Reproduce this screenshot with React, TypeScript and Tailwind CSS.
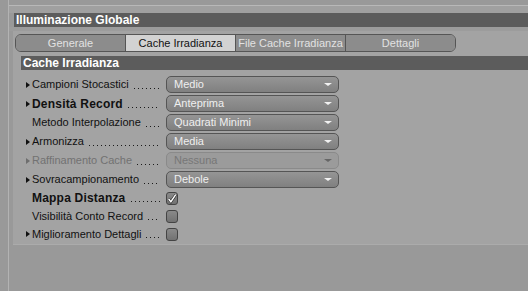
import React from "react";

type Row =
  | { kind: "select"; label: string; value: string; arrow?: boolean; bold?: boolean; disabled?: boolean }
  | { kind: "check"; label: string; checked?: boolean; arrow?: boolean; bold?: boolean };

const rows: Row[] = [
  { kind: "select", label: "Campioni Stocastici", value: "Medio", arrow: true },
  { kind: "select", label: "Densità Record", value: "Anteprima", arrow: true, bold: true },
  { kind: "select", label: "Metodo Interpolazione", value: "Quadrati Minimi" },
  { kind: "select", label: "Armonizza", value: "Media", arrow: true },
  { kind: "select", label: "Raffinamento Cache", value: "Nessuna", arrow: true, disabled: true },
  { kind: "select", label: "Sovracampionamento", value: "Debole", arrow: true },
  { kind: "check", label: "Mappa Distanza", checked: true, bold: true },
  { kind: "check", label: "Visibilità Conto Record" },
  { kind: "check", label: "Miglioramento Dettagli", arrow: true },
];

const tabs = ["Generale", "Cache Irradianza", "File Cache Irradianza", "Dettagli"];

const Arrow = ({ gray }: { gray?: boolean }) => (
  <span
    className={
      "inline-block w-0 h-0 border-y-[3px] border-y-transparent border-l-[4px] " +
      (gray ? "border-l-[#6e6e6e]" : "border-l-[#111]")
    }
  />
);

const Leader = ({ label, bold, disabled }: { label: string; bold?: boolean; disabled?: boolean }) => (
  <div className="flex items-center w-[130px] whitespace-nowrap">
    <span
      className={
        "shrink-0 " +
        (bold ? "font-bold text-[12px] tracking-[0.2px] " : "") +
        (disabled ? "text-[#727272]" : "text-[#111]")
      }
    >
      {label}
    </span>
    {/* puntini */}
    <span className="ml-[5px] mr-[2px] mt-[7px] flex-1 min-w-0 h-[1px] bg-[linear-gradient(to_right,#1a1a1a_1px,transparent_1px)] bg-[length:4px_1px]" />
  </div>
);

const App: React.FC = () => {
  return (
    <div
      className="w-[528px] h-[291px] bg-[#999999] flex overflow-hidden text-[11px] leading-none"
      style={{ fontFamily: '"Liberation Sans", Arial, sans-serif' }}
    >
      {/* strip sinistra */}
      <div className="w-[9px] h-full border-r border-[#b3b3b3]" />

      <div className="flex-1 flex flex-col">
        {/* linea superiore */}
        <div className="h-[6px] border-b border-[#b8b8b8]" />
        <div className="h-[7px] bg-[#a0a0a0]" />

        {/* header */}
        <div className="ml-[5px] h-[14px] bg-[#5c5c5c] flex items-center pl-[2px]">
          <span className="text-white font-bold text-[12px]">Illuminazione Globale</span>
        </div>
        <div className="h-[4px] bg-[#9c9c9c]" />

        {/* pannello */}
        <div className="ml-[4px] bg-[#a3a3a3] h-[214px] border-b border-[#ababab] flex flex-col">
          {/* tabs */}
          <div className="mt-[3px] ml-[2px] w-[441px] h-[18px] flex rounded-[6px] border border-[#555] overflow-hidden">
            {tabs.map((t, i) => (
              <div
                key={t}
                className={
                  "flex-1 flex items-center justify-center whitespace-nowrap " +
                  (i > 0 ? "border-l border-[#555] " : "") +
                  (i === 1 ? "bg-[#d2d2d2] text-[#111]" : "bg-[#8c8c8c] text-[#e2e2e2]")
                }
              >
                {t}
              </div>
            ))}
          </div>

          {/* sezione */}
          <div className="mt-[4px] ml-[8px] h-[14px] bg-[#5c5c5c] flex items-center pl-[2px]">
            <span className="text-white font-bold text-[12px]">Cache Irradianza</span>
          </div>

          <div className="mt-[5px] flex flex-col">
            {rows.map((r) => (
              <div
                key={r.label}
                className={"flex items-center " + (r.kind === "select" ? "h-[19px]" : "h-[18px]")}
              >
                <div className="w-[19px] pl-[13px] flex items-center">
                  {r.arrow && <Arrow gray={r.kind === "select" && r.disabled} />}
                </div>
                <Leader
                  label={r.label}
                  bold={r.bold}
                  disabled={r.kind === "select" && r.disabled}
                />
                {r.kind === "select" ? (
                  <div
                    className={
                      "ml-[4px] w-[173px] h-[17px] rounded-[5px] border flex items-center justify-between pl-[7px] pr-[6px] " +
                      (r.disabled
                        ? "border-[#8a8a8a] bg-[#9b9b9b] text-[#777]"
                        : "border-[#555] bg-gradient-to-b from-[#959595] to-[#808080] text-[#efefef]")
                    }
                  >
                    <span>{r.value}</span>
                    <span
                      className={
                        "w-0 h-0 border-x-[4px] border-x-transparent border-t-[3px] " +
                        (r.disabled ? "border-t-[#666]" : "border-t-[#f2f2f2]")
                      }
                    />
                  </div>
                ) : (
                  <div className="ml-[4px] w-[12px] h-[13px] rounded-[3px] border border-[#444] bg-gradient-to-b from-[#8a8a8a] to-[#727272] flex items-center justify-center">
                    {r.checked && (
                      <svg width="11" height="11" viewBox="0 0 11 11">
                        <path d="M1.8 6 L4.3 9 L9.6 1.3" fill="none" stroke="#2a2a2a" strokeWidth="3" />
                        <path d="M1.8 6 L4.3 9 L9.6 1.3" fill="none" stroke="#fff" strokeWidth="1.6" />
                      </svg>
                    )}
                  </div>
                )}
              </div>
            ))}
          </div>
        </div>
      </div>
    </div>
  );
};

export default App;
